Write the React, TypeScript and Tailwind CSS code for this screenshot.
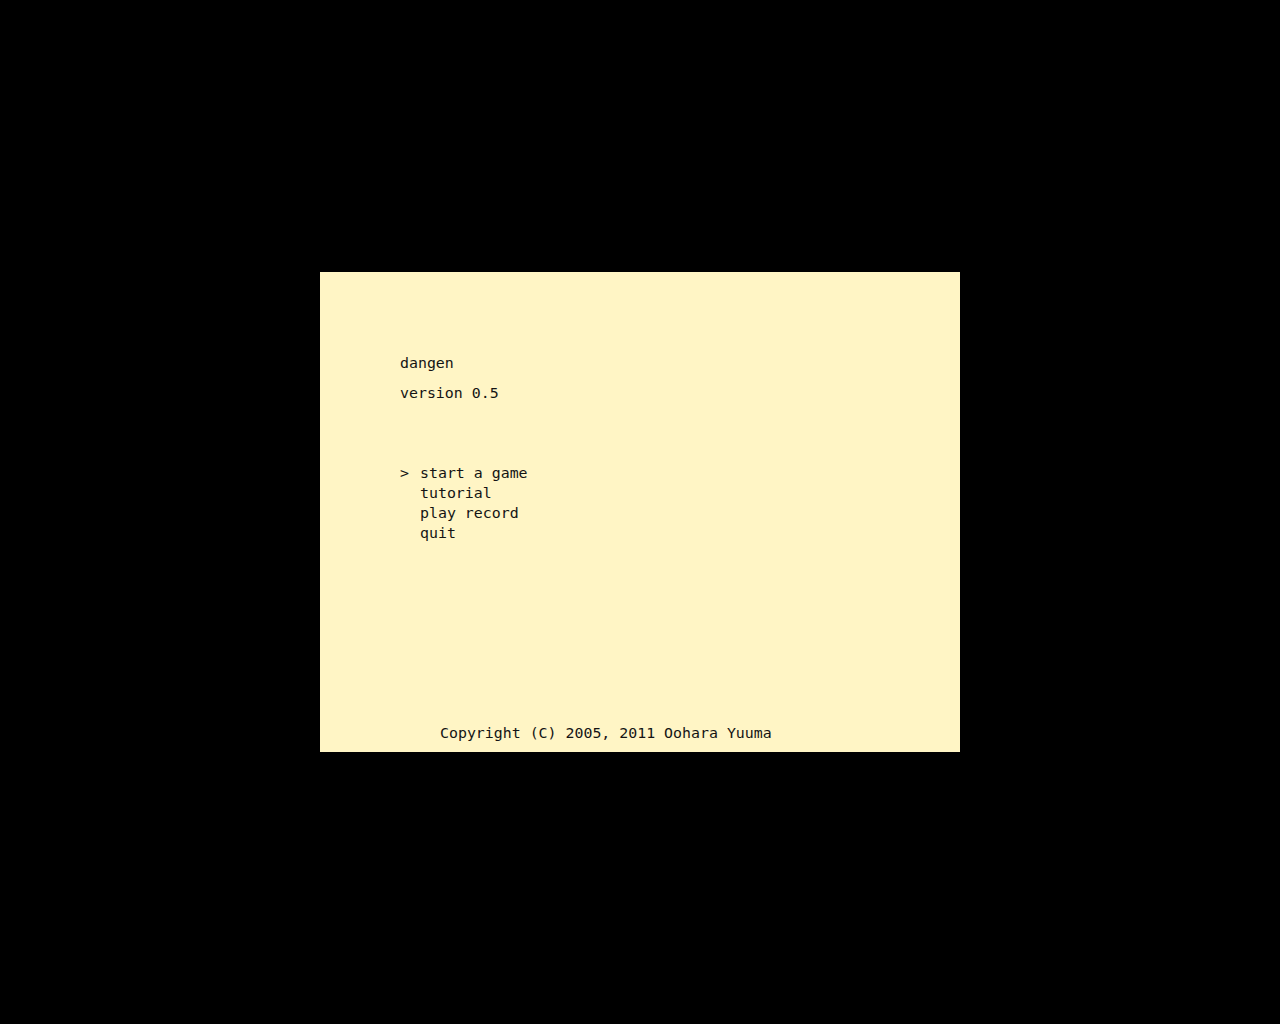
import React from 'react';

const items = ['start a game', 'tutorial', 'play record', 'quit'];

export default function App() {
  const selected = 0;

  return (
    <div className="w-full h-screen bg-black flex items-center justify-center">
      <div
        className="w-[640px] h-[480px] bg-[#fff5c5] text-[#141414] flex flex-col pt-[81px] pb-[9px] pl-[80px] text-[14.9px] leading-[20px]"
        style={{ fontFamily: '"DejaVu Sans Mono", monospace' }}
      >
        {/* Title */}
        <div>dangen</div>
        <div className="mt-[10px]">version 0.5</div>

        {/* Menu */}
        <div className="mt-[60px] flex flex-col">
          {items.map((item, i) => (
            <div key={item} className="flex">
              <span className="w-[20px]">{i === selected ? '>' : ''}</span>
              <span>{item}</span>
            </div>
          ))}
        </div>

        {/* Footer */}
        <div className="mt-auto pl-[40px] whitespace-pre">Copyright (C) 2005, 2011 Oohara Yuuma</div>
      </div>
    </div>
  );
}
